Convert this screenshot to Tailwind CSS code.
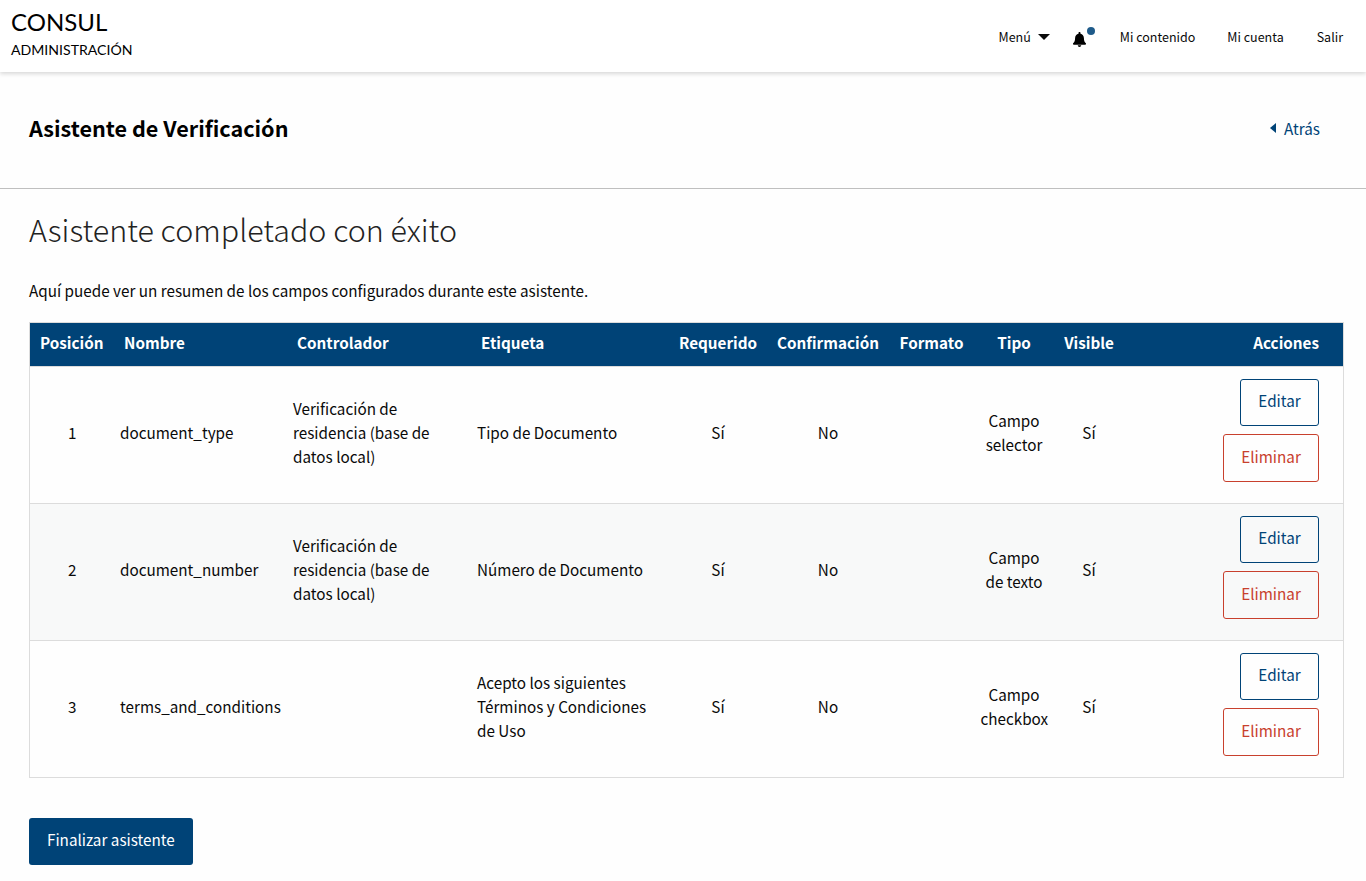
<!DOCTYPE html>
<html lang="es">
<head>
    <meta charset="UTF-8">
    <title>Asistente de Verificación</title>
    <script src="https://cdn.jsdelivr.net/npm/@tailwindcss/browser@4"></script>
</head>
<body class="bg-[#fefefe] text-[#0a0a0a] font-['Noto_Sans_CJK_SC','Noto_Sans',sans-serif] text-[15.25px] leading-[24px]">
    <header class="h-[72px] bg-white shadow-[0_2px_4px_rgba(0,0,0,0.15)] flex items-center justify-between pl-[11px] pr-[23px]">
        <div class="font-['Lato',sans-serif] text-black">
            <div class="text-[24px] leading-[30px] -mt-[5px]">CONSUL</div>
            <div class="text-[14.1px] leading-[20px] mt-[3px]">ADMINISTRACIÓN</div>
        </div>
        <nav class="flex items-center text-[12.5px] leading-[20px] mt-[2px]">
            <span>Menú</span>
            <svg class="ml-[7px]" width="12" height="6" viewBox="0 0 12 6"><path d="M0 0h12L6 6z" fill="#0a0a0a"/></svg>
            <span class="relative ml-[23px] mr-[34px] w-[13px] h-[16px]">
                <svg class="absolute left-0 top-[3px]" width="13" height="15" viewBox="0 0 13 15"><path d="M6.5 0c.6 0 1 .4 1 1v.7c2 .4 3.4 2.2 3.4 4.2 0 3.400 1 4.300 1.800 5.200.2.200.3.400.3.700 0 .5-.4 1-1 1H1c-.6 0-1-.5-1-1 0-.3.100-.5.300-.7.800-.9 1.800-1.800 1.800-5.200 0-2 1.400-3.800 3.400-4.200V1c0-.6.400-1 1-1zM4.800 13.300h3.400c0 1-.8 1.700-1.700 1.700s-1.700-.7-1.700-1.700z" fill="#000"/></svg>
                <span class="absolute left-[14px] -top-[2px] w-[8px] h-[8px] rounded-full bg-[#1f5b8a]"></span>
            </span>
            <span>Mi contenido</span>
            <span class="ml-[32px]">Mi cuenta</span>
            <span class="ml-[33px]">Salir</span>
        </nav>
    </header>

    <section class="h-[117px] border-b border-[#bfbfbf] flex items-center justify-between pl-[29px] pr-[46px]">
        <h1 class="text-[21.6px] leading-[34px] font-bold text-black -mt-[4px]">Asistente de Verificación</h1>
        <a href="#" class="flex items-center leading-[26px] text-[#004377] -mt-[4px]">
            <svg class="mr-[8px]" width="6" height="10" viewBox="0 0 6 10"><path d="M6 0v10L0 5z" fill="#004377"/></svg>
            Atrás
        </a>
    </section>

    <main class="px-[29px] pr-[22px]">
        <h2 class="mt-[17px] text-[30.45px] leading-[46px] font-light text-[#222]">Asistente completado con éxito</h2>
        <p class="mt-[26px]">Aquí puede ver un resumen de los campos configurados durante este asistente.</p>

        <table class="mt-[20px] w-[1314px] table-fixed border border-[#dcdcdc] border-collapse">
            <colgroup>
                <col class="w-[78px]"><col class="w-[173px]"><col class="w-[184px]"><col class="w-[202px]"><col class="w-[102px]">
                <col class="w-[118px]"><col class="w-[90px]"><col class="w-[74px]"><col class="w-[76px]"><col class="w-[217px]">
            </colgroup>
            <thead class="bg-[#004377] text-white font-bold">
                <tr class="h-[44px] border-b border-[#dcdcdc] [&>th]:pb-[5px]">
                    <th class="pl-[6px] text-center">Posición</th>
                    <th class="pl-[16.5px] text-left">Nombre</th>
                    <th class="pl-[16.5px] text-left">Controlador</th>
                    <th class="pl-[16.5px] text-left">Etiqueta</th>
                    <th class="pl-[1px] text-center">Requerido</th>
                    <th class="pl-[1px] text-center">Confirmación</th>
                    <th class="text-center">Formato</th>
                    <th class="pl-[1px] text-center">Tipo</th>
                    <th class="pl-[1px] text-center">Visible</th>
                    <th class="pr-[24px] text-right">Acciones</th>
                </tr>
            </thead>
            <tbody class="[&_td:not(:last-child)]:pb-[6px]">
                <tr class="h-[137px] border-b border-[#dcdcdc]">
                    <td class="pl-[7px] text-center">1</td>
                    <td class="pl-[12.5px]">document_type</td>
                    <td class="pl-[12.5px] pr-[12px]">Verificación de residencia (base de datos local)</td>
                    <td class="pl-[12.5px] pr-[12px]">Tipo de Documento</td>
                    <td class="pl-[1px] text-center">Sí</td>
                    <td class="pl-[1px] text-center">No</td>
                    <td></td>
                    <td class="pl-[4px] pr-[3px] text-center">Campo selector</td>
                    <td class="pl-[1px] text-center">Sí</td>
                    <td class="pr-[24px] pt-[12px] pb-[21px]">
                        <div class="flex flex-col items-end gap-[8px]">
                            <a href="#" class="w-[79px] h-[47px] pb-[5px] flex items-center justify-center border border-[#004377] rounded-[3px] text-[#004377]">Editar</a>
                            <a href="#" class="w-[96px] h-[48px] pb-[4px] flex items-center justify-center border border-[#c8402d] rounded-[3px] text-[#c8402d]">Eliminar</a>
                        </div>
                    </td>
                </tr>
                <tr class="h-[137px] border-b border-[#dcdcdc] bg-[#f8f9f9]">
                    <td class="pl-[7px] text-center">2</td>
                    <td class="pl-[12.5px]">document_number</td>
                    <td class="pl-[12.5px] pr-[12px]">Verificación de residencia (base de datos local)</td>
                    <td class="pl-[12.5px] pr-[12px]">Número de Documento</td>
                    <td class="pl-[1px] text-center">Sí</td>
                    <td class="pl-[1px] text-center">No</td>
                    <td></td>
                    <td class="pl-[4px] pr-[3px] text-center">Campo de&nbsp;texto</td>
                    <td class="pl-[1px] text-center">Sí</td>
                    <td class="pr-[24px] pt-[12px] pb-[21px]">
                        <div class="flex flex-col items-end gap-[8px]">
                            <a href="#" class="w-[79px] h-[47px] pb-[5px] flex items-center justify-center border border-[#004377] rounded-[3px] text-[#004377]">Editar</a>
                            <a href="#" class="w-[96px] h-[48px] pb-[4px] flex items-center justify-center border border-[#c8402d] rounded-[3px] text-[#c8402d]">Eliminar</a>
                        </div>
                    </td>
                </tr>
                <tr class="h-[137px] border-b border-[#dcdcdc]">
                    <td class="pl-[7px] text-center">3</td>
                    <td class="pl-[12.5px]">terms_and_conditions</td>
                    <td class="pl-[12.5px] pr-[12px]"></td>
                    <td class="pl-[12.5px] pr-[12px]">Acepto los siguientes Términos y Condiciones de Uso</td>
                    <td class="pl-[1px] text-center">Sí</td>
                    <td class="pl-[1px] text-center">No</td>
                    <td></td>
                    <td class="pl-[4px] pr-[3px] text-center">Campo checkbox</td>
                    <td class="pl-[1px] text-center">Sí</td>
                    <td class="pr-[24px] pt-[12px] pb-[21px]">
                        <div class="flex flex-col items-end gap-[8px]">
                            <a href="#" class="w-[79px] h-[47px] pb-[5px] flex items-center justify-center border border-[#004377] rounded-[3px] text-[#004377]">Editar</a>
                            <a href="#" class="w-[96px] h-[48px] pb-[4px] flex items-center justify-center border border-[#c8402d] rounded-[3px] text-[#c8402d]">Eliminar</a>
                        </div>
                    </td>
                </tr>
            </tbody>
        </table>

        <a href="#" class="mt-[40px] inline-flex items-center h-[47px] px-[18px] pb-[6px] rounded-[3px] bg-[#004377] text-white">Finalizar asistente</a>
    </main>
</body>
</html>
